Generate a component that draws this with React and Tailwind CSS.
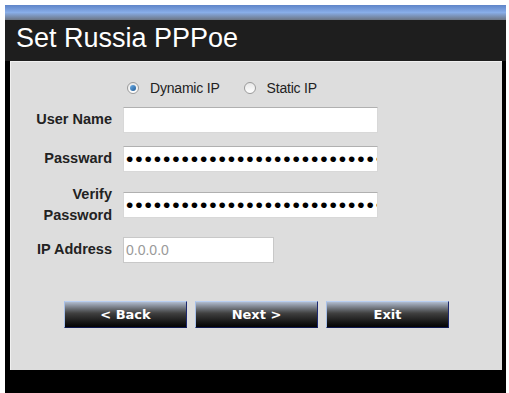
import React from 'react'
import { useState } from "react";

const Radio = ({ checked }) => (
  <span className="relative inline-flex h-[12px] w-[12px] items-center justify-center rounded-full border border-[#9a9a9a] bg-gradient-to-b from-[#e8e8e8] to-[#ffffff]">
    {checked && (
      <span className="h-[6px] w-[6px] rounded-full bg-gradient-to-br from-[#6fb0e8] to-[#1e5a96]"></span>
    )}
  </span>
);

const NavButton = ({ children }) => (
  <button
    type="button"
    className="h-[27px] w-[123px] border border-t-[#b8cef0] border-l-[#a8c0e8] border-r-[#1c2870] border-b-[#101a50] bg-gradient-to-b from-[#b0bccf] via-[#404040] via-45% to-[#050505] text-[13px] font-bold text-white [font-family:'DejaVu_Sans',sans-serif]"
  >
    {children}
  </button>
);

const App = () => {
  const [mode, setMode] = useState("dynamic");
  const [userName, setUserName] = useState("");
  const [password, setPassword] = useState("abcdefghijklmnopqrstuvwxyzabcdefghij");
  const [verify, setVerify] = useState("abcdefghijklmnopqrstuvwxyzabcdefghij");

  return (
    <div className="h-[393px] w-[509px] bg-white pl-[5px] pr-[3px] pt-[5px] [font-family:'Liberation_Sans',Arial,sans-serif]">
      <div className="flex h-full flex-col bg-black">
        <div className="h-[15px] bg-gradient-to-b from-[#5e84c8] via-[#89aee8] to-[#6c7584]"></div>
        <div className="h-[41px] bg-[#1e1e1e] pl-[11px] pt-[1px]">
          <h1 className="text-[27px] leading-[34px] text-white">Set Russia PPPoe</h1>
        </div>

        <div className="ml-[5px] mr-[4px] h-[309px] border-l border-t border-[#f0f0f0] bg-[#dddddd] pt-[18px]">
          <div className="flex h-[16px] items-center pl-[116px] text-[14px] text-[#222]">
            <label className="flex items-center" onClick={() => setMode("dynamic")}>
              <Radio checked={mode === "dynamic"} />
              <span className="ml-[11px] tracking-[-0.2px]">Dynamic IP</span>
            </label>
            <label className="ml-[24px] flex items-center" onClick={() => setMode("static")}>
              <Radio checked={mode === "static"} />
              <span className="ml-[11px] tracking-[-0.2px]">Static IP</span>
            </label>
          </div>

          <div className="mt-[11px] flex h-[26px] items-center">
            <div className="w-[101px] text-right text-[14.5px] font-bold text-[#222]">User Name</div>
            <input
              className="ml-[11px] h-[26px] w-[255px] border border-[#d8d8d8] border-t-[#b0b0b0] bg-white px-1 text-[14px] outline-none"
              type="text"
              value={userName}
              onChange={(e) => setUserName(e.target.value)}
            />
          </div>

          <div className="mt-[13px] flex h-[26px] items-center">
            <div className="w-[101px] text-right text-[14.5px] font-bold text-[#222]">Passward</div>
            <input
              className="ml-[11px] h-[26px] w-[255px] border border-[#d8d8d8] border-t-[#b0b0b0] bg-white pl-[2px] pr-0 text-[21px] tracking-[1.9px] text-black outline-none"
              type="password"
              value={password}
              onChange={(e) => setPassword(e.target.value)}
            />
          </div>

          <div className="mt-[12px] flex h-[42px] items-center">
            <div className="w-[101px] text-right text-[14.5px] font-bold leading-[21px] text-[#222]">
              Verify
              <br />
              Password
            </div>
            <input
              className="ml-[11px] h-[26px] w-[255px] border border-[#d8d8d8] border-t-[#b0b0b0] bg-white pl-[2px] pr-0 text-[21px] tracking-[1.9px] text-black outline-none"
              type="password"
              value={verify}
              onChange={(e) => setVerify(e.target.value)}
            />
          </div>

          <div className="mt-[11px] flex h-[26px] items-center">
            <div className="w-[101px] text-right text-[14.5px] font-bold text-[#222]">IP Address</div>
            <input
              className="ml-[11px] h-[26px] w-[151px] border border-[#c8c8c8] bg-white px-[2px] text-[14px] text-[#9a9a9a] outline-none"
              type="text"
              value="0.0.0.0"
              disabled
            />
          </div>

          <div className="mt-[38px] flex justify-center gap-[8px]">
            <NavButton>&lt; Back</NavButton>
            <NavButton>Next &gt;</NavButton>
            <NavButton>Exit</NavButton>
          </div>
        </div>
      </div>
    </div>
  )
}

export default App
